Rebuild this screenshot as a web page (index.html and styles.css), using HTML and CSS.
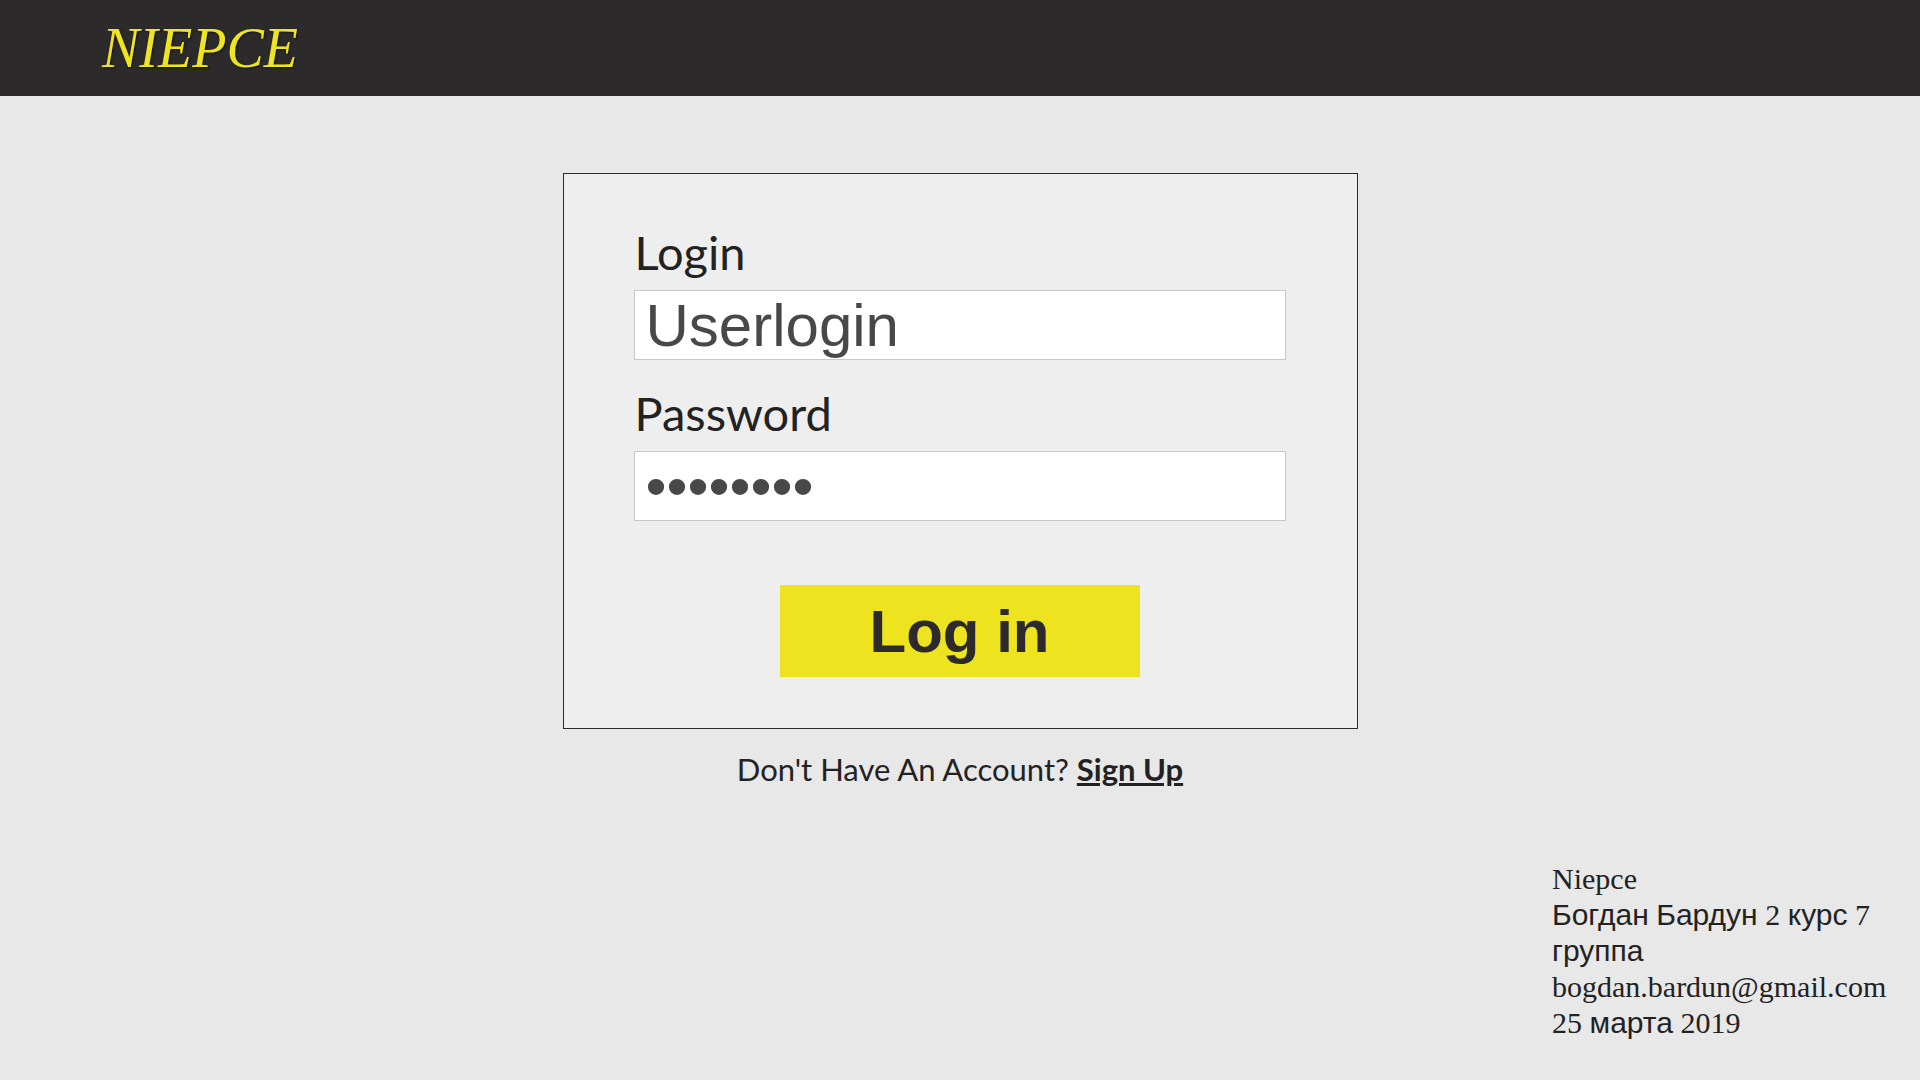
FILE: index.html
```html
<!DOCTYPE html>
<html lang="en">
<head>
<meta charset="utf-8">
<title>Niepce</title>
<link rel="stylesheet" href="styles.css">
</head>
<body>
<header class="header">
  <a class="logo" href="#">NIEPCE</a>
</header>
<main class="main">
  <form class="card">
    <div class="field">
      <label class="label" for="login">Login</label>
      <input class="input" id="login" type="text" value="Userlogin">
    </div>
    <div class="field">
      <label class="label" for="password">Password</label>
      <input class="input" id="password" type="password" value="password">
    </div>
    <button class="button" type="submit">Log in</button>
  </form>
  <p class="signup">Don't Have An Account? <a class="signup-link" href="#">Sign Up</a></p>
</main>
<footer class="footer">
  <p class="line">Niepce</p>
  <p class="line"><span class="cyr" lang="ru">Богдан</span> <span class="cyr" lang="ru">Бардун</span> 2 <span class="cyr" lang="ru">курс</span> 7 <span class="cyr" lang="ru">группа</span></p>
  <p class="line">bogdan.bardun@gmail.com</p>
  <p class="line">25 <span class="cyr" lang="ru">марта</span> 2019</p>
</footer>
</body>
</html>
```
FILE: styles.css
```css
* { box-sizing: border-box; }

body {
  margin: 0;
  min-height: 100vh;
  display: flex;
  flex-direction: column;
  background: #e8e8e8;
  color: #222;
  font-family: Lato, sans-serif;
}

.header {
  display: flex;
  align-items: center;
  height: 96px;
  padding: 0 102px;
  background: #2c2a2b;
}

.logo {
  color: #eee41f;
  font-family: "Liberation Serif", serif;
  font-size: 56px;
  font-style: italic;
  line-height: 64px;
  text-decoration: none;
  text-shadow: 1px 1px 2px #111;
}

.main {
  display: flex;
  flex-direction: column;
  align-items: center;
  padding: 77px 16px 0;
}

.card {
  display: flex;
  flex-direction: column;
  gap: 25px;
  width: 100%;
  max-width: 795px;
  padding: 50px 71px 51px 70px;
  border: 1px solid #2c2a2b;
  background: #eee;
}

.field {
  display: flex;
  flex-direction: column;
  gap: 10px;
}

.label {
  padding-left: 1px;
  font-size: 47px;
  line-height: 56px;
}

.input {
  width: 100%;
  height: 70px;
  padding: 0 11px;
  border: 1px solid #c8c8c8;
  border-radius: 0;
  background: #fff;
  color: #484848;
  font-family: "Liberation Sans", sans-serif;
  font-size: 60px;
  outline: none;
}

.button {
  align-self: center;
  width: 360px;
  max-width: 100%;
  height: 92px;
  margin-top: 39px;
  padding: 0;
  border: 0;
  background: #ede31f;
  color: #2c2a2b;
  font-family: "Liberation Sans", sans-serif;
  font-size: 60px;
  font-weight: 700;
}

.signup {
  margin: 22px 0 0;
  font-size: 31px;
  line-height: 36px;
}

.signup-link {
  color: inherit;
  font-weight: 700;
  text-decoration-thickness: 3px;
}

.footer {
  align-self: flex-end;
  width: 368px;
  margin-top: auto;
  padding: 48px 16px 39px 0;
  font-family: "Liberation Serif", serif;
  font-size: 30px;
  line-height: 36px;
}

.line { margin: 0; }

.cyr { font-family: "Liberation Sans", sans-serif; }
```
